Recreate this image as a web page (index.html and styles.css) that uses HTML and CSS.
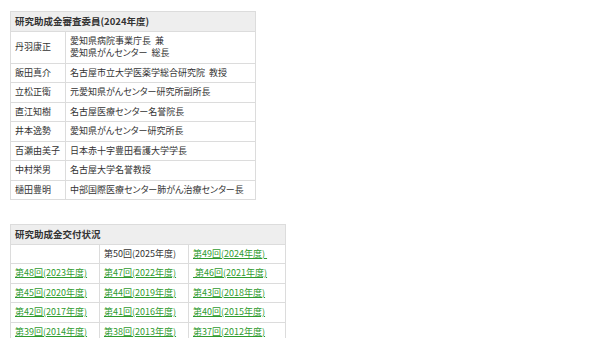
FILE: index.html
```html
<!DOCTYPE html>
<html lang="ja">
<head>
<meta charset="utf-8">
<link rel="stylesheet" href="styles.css">
</head>
<body>
<div class="page">
  <table class="tbl members">
    <colgroup><col class="col-name"><col class="col-role"></colgroup>
    <tr><th colspan="2" class="head">研究助成金審査委員(2024年度)</th></tr>
    <tr><td>丹羽康正</td><td>愛知県病院事業庁長&nbsp;&nbsp;兼<br>愛知県がんセンター&nbsp;&nbsp;総長</td></tr>
    <tr><td>飯田真介</td><td>名古屋市立大学医薬学総合研究院&nbsp;&nbsp;教授</td></tr>
    <tr><td>立松正衛</td><td>元愛知県がんセンター研究所副所長</td></tr>
    <tr><td>直江知樹</td><td>名古屋医療センター名誉院長</td></tr>
    <tr><td>井本逸勢</td><td>愛知県がんセンター研究所長</td></tr>
    <tr><td>百瀬由美子</td><td>日本赤十字豊田看護大学学長</td></tr>
    <tr><td>中村栄男</td><td>名古屋大学名誉教授</td></tr>
    <tr><td>樋田豊明</td><td>中部国際医療センター肺がん治療センター長</td></tr>
  </table>

  <table class="tbl grants">
    <colgroup><col class="col-a"><col class="col-b"><col class="col-c"></colgroup>
    <tr><th colspan="3" class="head">研究助成金交付状況</th></tr>
    <tr><td></td><td>第50回(2025年度)</td><td><a href="#">第49回(2024年度)&nbsp;</a></td></tr>
    <tr><td><a href="#">第48回(2023年度)</a></td><td><a href="#">第47回(2022年度)</a></td><td><a href="#">&nbsp;第46回(2021年度)</a></td></tr>
    <tr><td><a href="#">第45回(2020年度)</a></td><td><a href="#">第44回(2019年度)</a></td><td><a href="#">第43回(2018年度)</a></td></tr>
    <tr><td><a href="#">第42回(2017年度)</a></td><td><a href="#">第41回(2016年度)</a></td><td><a href="#">第40回(2015年度)</a></td></tr>
    <tr><td><a href="#">第39回(2014年度)</a></td><td><a href="#">第38回(2013年度)</a></td><td><a href="#">第37回(2012年度)</a></td></tr>
  </table>
</div>
</body>
</html>
```

FILE: styles.css
```css
html, body {
  margin: 0;
  padding: 0;
  background: #ffffff;
}
.page {
  padding: 11px 10px;
  font-family: "Noto Sans CJK JP", "Noto Sans", sans-serif;
  font-size: 9px;
  color: #333333;
  font-feature-settings: "palt";
}
.tbl {
  border-collapse: collapse;
  table-layout: fixed;
}
.tbl th, .tbl td {
  border: 1px solid #dcdcdc;
  padding: 3px 4px;
  line-height: 12.5px;
  text-align: left;
  vertical-align: middle;
  white-space: nowrap;
}
.tbl .head {
  background: #eeeeee;
  font-weight: bold;
  font-size: 9.5px;
  color: #333333;
}
.members {
  width: 246px;
}
.col-name {
  width: 55px;
}
.grants {
  width: 276px;
  margin-top: 24px;
}
.col-a, .col-b {
  width: 89px;
}
.grants a {
  color: #2e9b2e;
  text-decoration: underline;
}
```
